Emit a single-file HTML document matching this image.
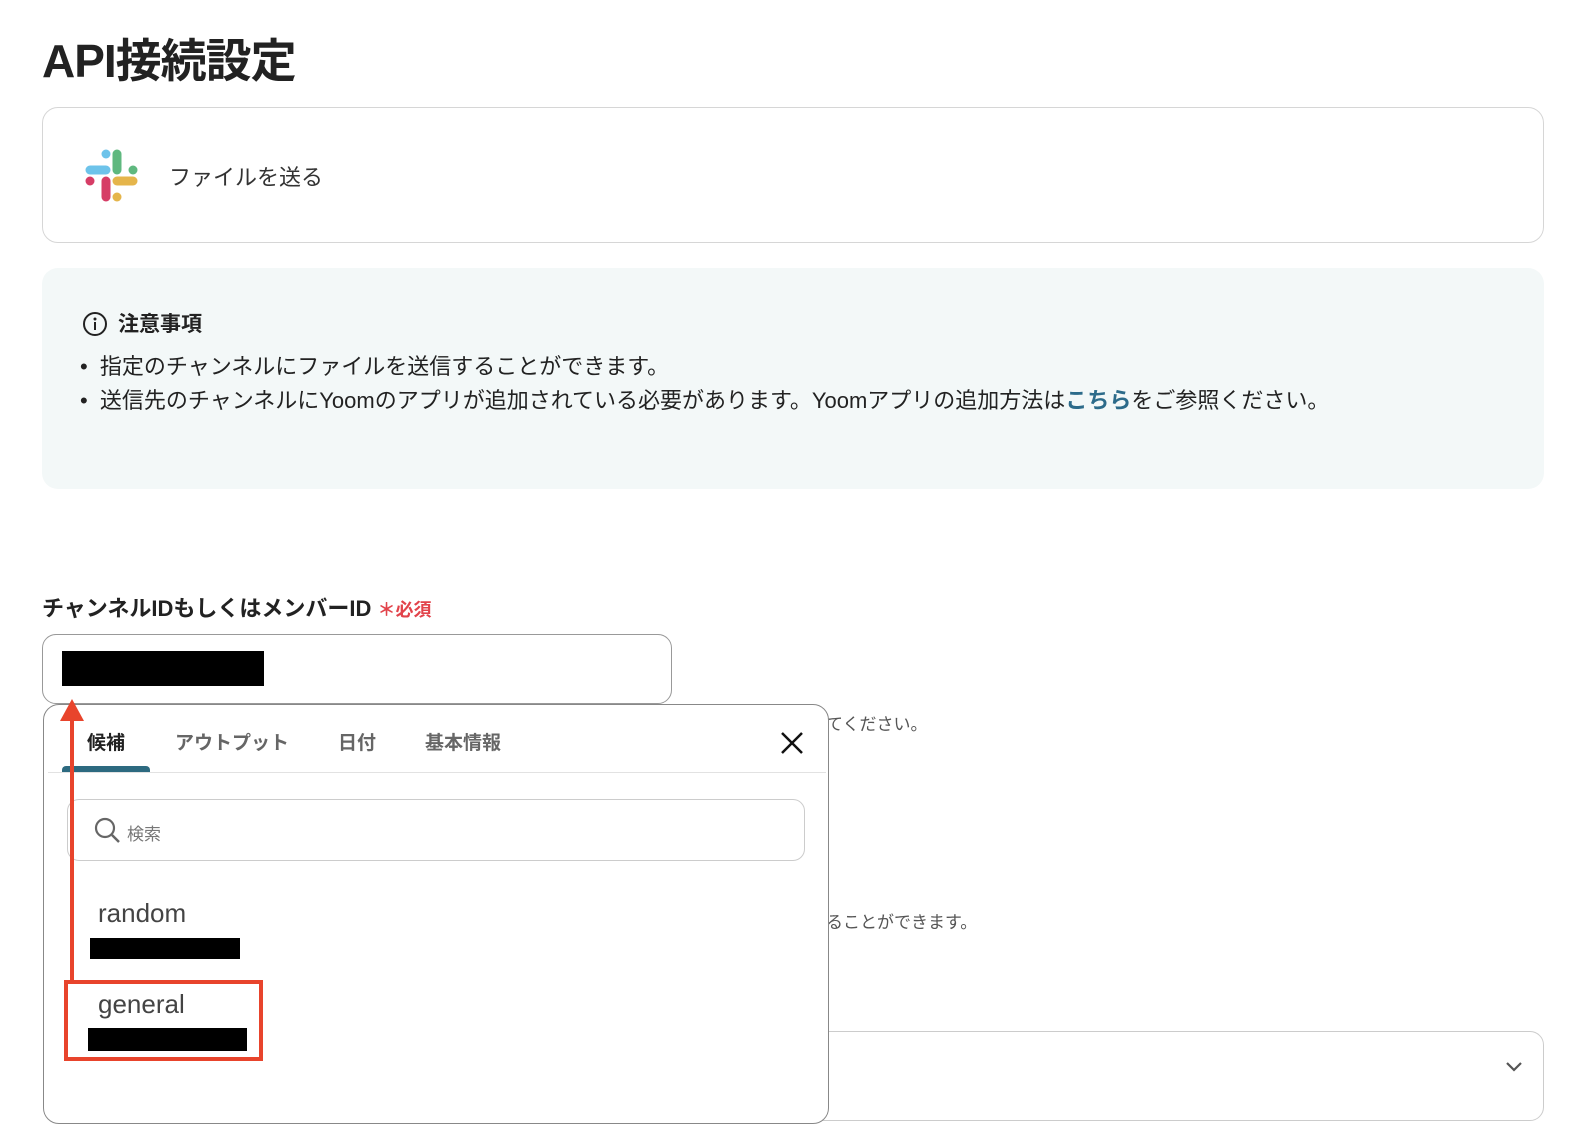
<!DOCTYPE html>
<html><head><meta charset="utf-8"><style>
*{box-sizing:border-box;margin:0;padding:0}
body{width:1594px;height:1096px;overflow:hidden;background:#fff;font-family:"Liberation Sans","Noto Sans CJK JP",sans-serif;color:#222;position:relative}
.abs{position:absolute}
</style></head><body>
<div class="abs" style="left:42px;top:25px;font-size:46px;font-weight:bold;color:#222;letter-spacing:-1px">API接続設定</div>
<div class="abs" style="left:42px;top:107px;width:1502px;height:136px;border:1px solid #d6d6d6;border-radius:16px"></div>
<svg class="abs" style="left:85px;top:149px" width="54" height="54" viewBox="0 0 54 54">
<g stroke-linecap="round" stroke-width="9" fill="none">
<line x1="32" y1="5" x2="32" y2="21" stroke="#5fb87f"/><line x1="48" y1="21" x2="48" y2="21" stroke="#5fb87f"/>
<line x1="5" y1="21" x2="21" y2="21" stroke="#6dc3ea"/><line x1="21" y1="5" x2="21" y2="5" stroke="#6dc3ea"/>
<line x1="21" y1="32" x2="21" y2="48" stroke="#d63d66"/><line x1="5" y1="32" x2="5" y2="32" stroke="#d63d66"/>
<line x1="32" y1="32" x2="48" y2="32" stroke="#e5b54b"/><line x1="32" y1="48" x2="32" y2="48" stroke="#e5b54b"/>
</g></svg>
<div class="abs" style="left:169px;top:160px;font-size:22px;color:#333">ファイルを送る</div>

<div class="abs" style="left:42px;top:268px;width:1502px;height:221px;background:#f3f8f8;border-radius:16px"></div>
<svg class="abs" style="left:82px;top:311px" width="26" height="26" viewBox="0 0 26 26"><circle cx="13" cy="13" r="11" fill="none" stroke="#222" stroke-width="2"/><circle cx="13" cy="8" r="1.5" fill="#222"/><rect x="12" y="11" width="2" height="8" fill="#222"/></svg>
<div class="abs" style="left:118px;top:308px;font-size:21px;font-weight:bold">注意事項</div>
<div class="abs" style="left:80px;top:350px;font-size:22px;line-height:34px;color:#222">
<div>•&nbsp; 指定のチャンネルにファイルを送信することができます。</div>
<div>•&nbsp; 送信先のチャンネルにYoomのアプリが追加されている必要があります。Yoomアプリの追加方法は<b style="color:#2c6b8a">こちら</b>をご参照ください。</div>
</div>

<div class="abs" style="left:42px;top:591px;font-size:22px;font-weight:bold">チャンネルIDもしくはメンバーID <span style="color:#e2434b;font-size:18px">＊必須</span></div>
<div class="abs" style="left:42px;top:634px;width:630px;height:70px;border:1px solid #999;border-radius:14px"></div>
<div class="abs" style="left:62px;top:651px;width:202px;height:35px;background:#000"></div>
<div class="abs" style="left:826px;top:710px;font-size:17px;color:#555">てください。</div>
<div class="abs" style="left:826px;top:908px;font-size:17px;color:#555">ることができます。</div>
<div class="abs" style="left:800px;top:1031px;width:744px;height:90px;border:1px solid #ccc;border-radius:14px"></div>
<svg class="abs" style="left:1504px;top:1060px" width="20" height="14" viewBox="0 0 20 14"><path d="M3 3l7 7 7-7" stroke="#555" stroke-width="2.2" fill="none"/></svg>

<div class="abs" style="left:43px;top:704px;width:786px;height:420px;border:1px solid #888;border-radius:16px;background:#fff"></div>
<div class="abs" style="left:87px;top:728px;font-size:19px;font-weight:bold;color:#222">候補</div>
<div class="abs" style="left:175px;top:728px;font-size:19px;font-weight:bold;color:#666">アウトプット</div>
<div class="abs" style="left:338px;top:728px;font-size:19px;font-weight:bold;color:#666">日付</div>
<div class="abs" style="left:425px;top:728px;font-size:19px;font-weight:bold;color:#666">基本情報</div>
<svg class="abs" style="left:779px;top:730px" width="26" height="26" viewBox="0 0 26 26"><path d="M3 3l20 20M23 3L3 23" stroke="#111" stroke-width="2.5"/></svg>
<div class="abs" style="left:62px;top:766px;width:88px;height:6px;background:#2d6a80;border-radius:4px 4px 0 0"></div>
<div class="abs" style="left:48px;top:772px;width:778px;height:1px;background:#e2e2e2"></div>
<div class="abs" style="left:67px;top:799px;width:738px;height:62px;border:1px solid #ccc;border-radius:12px"></div>
<svg class="abs" style="left:94px;top:817px" width="28" height="28" viewBox="0 0 28 28"><circle cx="11" cy="11" r="9" fill="none" stroke="#666" stroke-width="2.2"/><path d="M18 18l7 7" stroke="#666" stroke-width="2.5"/></svg>
<div class="abs" style="left:127px;top:820px;font-size:17px;color:#777">検索</div>
<div class="abs" style="left:98px;top:898px;font-size:26px;color:#444">random</div>
<div class="abs" style="left:90px;top:938px;width:150px;height:21px;background:#000"></div>
<div class="abs" style="left:98px;top:989px;font-size:26px;color:#444">general</div>
<div class="abs" style="left:88px;top:1028px;width:159px;height:23px;background:#000"></div>
<div class="abs" style="left:64px;top:980px;width:199px;height:81px;border:4px solid #e8442c"></div>
<div class="abs" style="left:70px;top:720px;width:4px;height:260px;background:#e8442c"></div>
<svg class="abs" style="left:59px;top:698px" width="26" height="24" viewBox="0 0 26 24"><path d="M13 1L25 23H1z" fill="#e8442c"/></svg>
</body></html>
